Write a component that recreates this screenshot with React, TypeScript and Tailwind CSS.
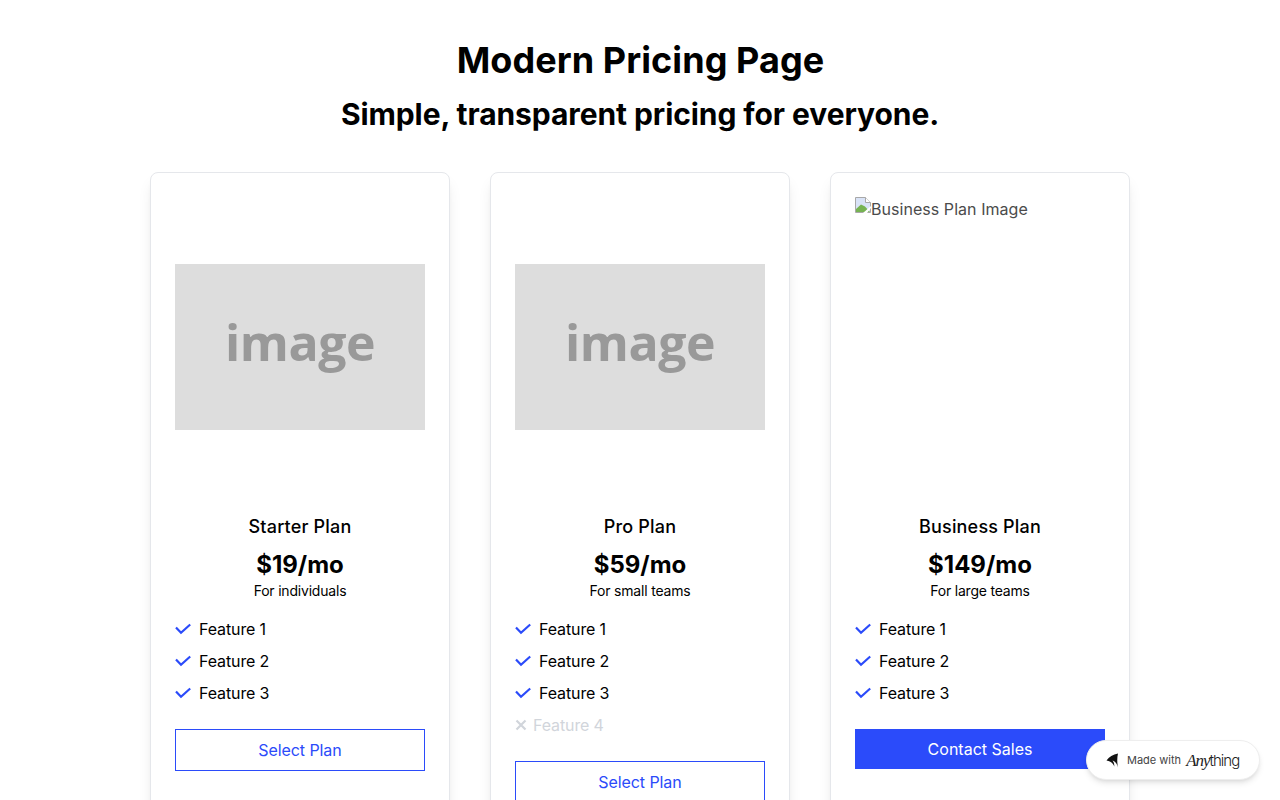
import React from "react";

const Check = () => (
  <svg width="16" height="16" viewBox="0 0 16 16" fill="none" className="shrink-0">
    <path d="M1 4.5 L6 9.8 L15.2 1.5" transform="translate(0 2)" stroke="#2b4bfa" strokeWidth="2.2" />
  </svg>
);

const Cross = () => (
  <svg width="12" height="12" viewBox="0 0 12 12" fill="none" className="shrink-0 -mr-[2px]">
    <path d="M1.5 1.5 L10.5 10.5 M10.5 1.5 L1.5 10.5" stroke="#d1d5db" strokeWidth="2.2" />
  </svg>
);

const Placeholder = () => (
  <div className="w-full h-[300px] flex items-center">
    <div className="w-full h-[166px] bg-[#dddddd] flex items-center justify-center">
      <span className="text-[#999999] text-[50px] leading-none font-bold font-['Open_Sans',sans-serif] tracking-[-0.5px] pb-[11px]">image</span>
    </div>
  </div>
);

const Broken = () => (
  <div className="w-full h-[300px] text-[#4b4b4b]">
    <div className="flex items-start leading-6">
      <svg width="16" height="16" viewBox="0 0 16 16" className="shrink-0">
        <path d="M0.5 0.5 H10.5 L15.5 5.5 V15.5 H0.5 Z" fill="#d9e3f7" stroke="#a8a8a8" />
        <path d="M10.5 0.5 V5.5 H15.5" fill="#ffffff" stroke="#a8a8a8" />
        <path d="M1 15 V12 L6 7.5 L10 9.5 L15 15 Z" fill="#76b352" />
        <path d="M8 16 L16 9 V11 L12 16 Z" fill="#ffffff" />
      </svg>
      <span className="tracking-[0.05px]">Business Plan Image</span>
    </div>
  </div>
);

type Plan = {
  name: string;
  price: string;
  desc: string;
  image: React.ReactNode;
  extra?: boolean;
  primary?: boolean;
};

const plans: Plan[] = [
  { name: "Starter Plan", price: "$19/mo", desc: "For individuals", image: <Placeholder /> },
  { name: "Pro Plan", price: "$59/mo", desc: "For small teams", image: <Placeholder />, extra: true },
  { name: "Business Plan", price: "$149/mo", desc: "For large teams", image: <Broken />, primary: true },
];

export default function App() {
  return (
    <div className="relative h-[800px] overflow-hidden bg-white text-black font-['Inter',sans-serif]">
      <div className="pt-[36px] flex flex-col items-center">
        <h1 className="text-4xl leading-[48px] font-bold tracking-[0.08px] pl-[1px]">Modern Pricing Page</h1>
        <h2 className="text-3xl leading-[40px] font-bold mt-[10px] tracking-[-0.08px]">Simple, transparent pricing for everyone.</h2>
        <div className="flex gap-10 mt-[38px] items-start">
          {plans.map((p) => (
            <div key={p.name} className="w-[300px] h-[760px] bg-white border border-[#e5e7eb] rounded-lg shadow-lg p-6">
              {p.image}
              <div className="flex flex-col items-center pt-[16px]">
                <div className="text-lg leading-7 font-medium tracking-[0.18px]">{p.name}</div>
                <div className="text-2xl leading-8 font-bold mt-[8px]">{p.price}</div>
                <div className="text-sm leading-5 tracking-[-0.2px]">{p.desc}</div>
              </div>
              <div className="flex flex-col mt-[12px]">
                {["Feature 1", "Feature 2", "Feature 3"].map((f) => (
                  <div key={f} className="flex items-center gap-2 h-8">
                    <Check />
                    <span className="tracking-[-0.12px]">{f}</span>
                  </div>
                ))}
                {p.extra && (
                  <div className="flex items-center gap-2 h-8 text-[#d1d5db]">
                    <Cross />
                    <span className="tracking-[-0.12px]">Feature 4</span>
                  </div>
                )}
              </div>
              {p.primary ? (
                <button className="w-full h-10 mt-[20px] bg-[#2b4bfa] text-white">Contact Sales</button>
              ) : (
                <button className="w-full h-[42px] mt-[20px] border border-[#2b4bfa] text-[#2b4bfa] tracking-[-0.08px]">Select Plan</button>
              )}
            </div>
          ))}
        </div>
      </div>
      <div className="absolute left-[1086px] top-[740px] w-[174px] h-10 bg-white rounded-full border border-[#eeeeee] shadow-md flex items-center pl-[18px]">
        <svg width="15" height="15" viewBox="0 0 15 15" className="shrink-0">
          <path d="M1.5 7.5 C4 4 8 1.5 13 0.5 C12 4.5 12 9.5 13 14.5 C12 10.5 10 8.2 7.5 7.5 C8.8 9 9.4 11 9.3 13.5 C8.2 10.2 5.5 8 1.5 7.5 Z" fill="#111111" />
        </svg>
        <span className="ml-[7px] text-[11px] text-[#444444] leading-none pt-[1px]">Made with</span>
        <span className="ml-[5px] text-[17px] italic font-['Liberation_Serif',serif] text-[#222222] leading-none tracking-[-1px]">Any</span>
        <span className="text-[15px] font-light text-[#222222] leading-none tracking-[-1px]">thing</span>
      </div>
    </div>
  );
}
